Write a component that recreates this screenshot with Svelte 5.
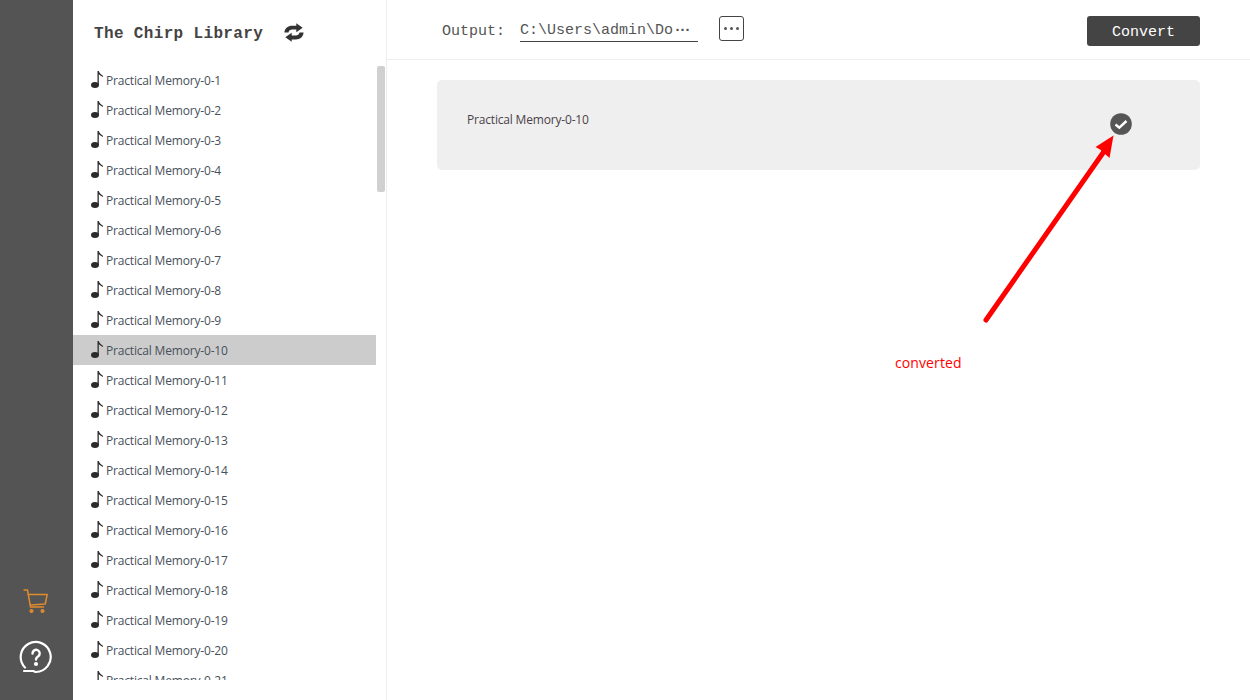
<script lang="ts">
	const tracks = Array.from({ length: 21 }, (_, i) => `Practical Memory-0-${i + 1}`);
	const selected = 'Practical Memory-0-10';
</script>

<div class="app">
	<nav class="rail">
		<svg class="cart" viewBox="0 0 26 26" fill="none" stroke="#e08a2e" stroke-width="1.5" stroke-linecap="round" stroke-linejoin="round">
			<path d="M1 2h3.500l3 17h13" />
			<path d="M5.200 6.500h19l-2 9.500-14.500 1" />
			<circle cx="8.500" cy="23" r="1.300" fill="#e08a2e" />
			<circle cx="19.500" cy="23" r="1.300" fill="#e08a2e" />
		</svg>
		<svg class="help" viewBox="0 0 34 34" fill="none" stroke="#fff" stroke-width="2.200" stroke-linecap="round">
			<path d="M5 31h9.500c1 1 2 1 2.500 1a15 15 0 1 0-11-4.500" />
			<path d="M13.500 13.500a3.600 3.600 0 1 1 5.500 3c-1.300.8-2 1.500-2 3" stroke-width="2.400" />
			<circle cx="17" cy="24" r="1" fill="#fff" />
		</svg>
	</nav>

	<aside class="library">
		<header class="library-head">
			<h1>The Chirp Library</h1>
			<svg class="refresh" viewBox="0 0 24 20" fill="#333">
				<path d="M1.500 10C2 5 5.500 2.500 10 2.500h4.500V0l7 4.800-7 4.800V6.800H10c-2 0-3.500 1-4 3.200z" />
				<path d="M22.500 10c-.5 5-4 7.500-8.500 7.500H9.500V20l-7-4.800 7-4.800v2.800H14c2 0 3.500-1 4-3.200z" />
			</svg>
		</header>
		<div class="list-wrap">
			<ul class="list">
				{#each tracks as track}
					<li class:selected={track === selected}>
						<svg class="note" viewBox="0 0 13 17" fill="#2b2b2b">
							<ellipse cx="4" cy="14" rx="4" ry="3" />
							<path d="M6.500 0h1.300c.3 2 2 3 4.400 5l-.7.900c-1.500-1-2.900-2-3.700-2.600V14H6.500z" />
						</svg>
						<span>{track}</span>
					</li>
				{/each}
			</ul>
			<div class="scroll-track"><div class="scroll-thumb"></div></div>
		</div>
	</aside>

	<main class="content">
		<header class="toolbar">
			<div class="output">
				<span class="output-label">Output:</span>
				<span class="output-path">C:\Users\admin\Do<span class="ellipsis">···</span></span>
				<button class="browse" aria-label="Browse"><i></i><i></i><i></i></button>
			</div>
			<button class="convert">Convert</button>
		</header>
		<section class="queue">
			<div class="job">
				<span class="job-name">{selected}</span>
				<svg class="done" viewBox="0 0 22 22">
					<circle cx="11" cy="11" r="10.800" fill="#555" />
					<path d="M5.500 11.500l3.800 3.200L16.500 8" fill="none" stroke="#fff" stroke-width="2.400" />
				</svg>
			</div>
		</section>
		<svg class="arrow" viewBox="0 0 160 220" fill="red">
			<path d="M3 204L122 34" stroke="red" stroke-width="5" stroke-linecap="round" />
			<path d="M130.500 19.500l-18 11.500 4.500 2.500 9.500 8.500z" />
		</svg>
		<span class="note-text">converted</span>
	</main>
</div>

<style>
	:global(body) {
		margin: 0;
		background: #fff;
	}

	.app {
		display: flex;
		height: 700px;
		width: 1250px;
		overflow: hidden;
		font-family: "Open Sans", "Noto Sans", sans-serif;
	}

	.rail {
		width: 73px;
		flex-shrink: 0;
		background: #545454;
		display: flex;
		flex-direction: column;
		align-items: center;
		justify-content: flex-end;
		padding-bottom: 26px;
		box-sizing: border-box;
	}

	.cart {
		width: 26px;
		height: 26px;
		margin: 0 2px 26px 0;
	}

	.help {
		width: 34px;
		height: 34px;
		margin-right: 1px;
	}

	.library {
		width: 314px;
		flex-shrink: 0;
		border-right: 1px solid #eee;
		box-sizing: border-box;
		display: flex;
		flex-direction: column;
	}

	.library-head {
		height: 65px;
		flex-shrink: 0;
		display: flex;
		align-items: center;
		padding: 0 0 0 21px;
		gap: 21px;
	}

	h1 {
		margin: 2px 0 0;
		font: bold 16px "Liberation Mono", monospace;
		letter-spacing: 0.35px;
		color: #444;
	}

	.refresh {
		width: 22px;
		height: 19px;
		margin-left: -1px;
	}

	.list-wrap {
		position: relative;
		height: 615px;
		overflow: hidden;
	}

	.list {
		list-style: none;
		margin: 0;
		padding: 0;
		width: 303px;
	}

	.list li {
		height: 30px;
		display: flex;
		align-items: center;
		padding-left: 18px;
		gap: 2px;
		font-size: 12px;
		letter-spacing: -0.18px;
		color: #48505a;
	}

	.list li.selected {
		background: #ccc;
	}

	.note {
		width: 13px;
		height: 17px;
		margin-top: -1px;
	}

	.scroll-track {
		position: absolute;
		top: 0;
		right: 1px;
		width: 8px;
		height: 100%;
	}

	.scroll-thumb {
		height: 126px;
		margin-top: 1px;
		background: #d0d0d0;
		border-radius: 2px;
	}

	.content {
		flex: 1;
		position: relative;
		display: flex;
		flex-direction: column;
	}

	.toolbar {
		height: 60px;
		box-sizing: border-box;
		border-bottom: 1px solid #eee;
		display: flex;
		align-items: center;
		justify-content: space-between;
		padding: 0 50px 0 55px;
		font-family: "Liberation Mono", monospace;
		font-size: 15px;
		color: #555;
	}

	.output {
		display: flex;
		align-items: center;
		margin-top: 1px;
	}

	.output-label {
		width: 78px;
		padding-top: 3px;
	}

	.output-path {
		width: 178px;
		height: 23px;
		line-height: 24px;
		box-sizing: border-box;
		border-bottom: 1px solid #444;
		white-space: nowrap;
		overflow: hidden;
	}

	.ellipsis {
		letter-spacing: -4px;
		font-weight: bold;
	}

	.browse {
		margin: 0 0 3px 21px;
		width: 25px;
		height: 25px;
		box-sizing: border-box;
		padding: 0;
		background: #fff;
		border: 1px solid #444;
		border-radius: 3px;
		display: flex;
		align-items: center;
		justify-content: center;
		gap: 3px;
	}

	.browse i {
		width: 3px;
		height: 3px;
		border-radius: 50%;
		background: #555;
	}

	.convert {
		width: 113px;
		height: 30px;
		margin-top: 2px;
		padding: 3px 0 0;
		border: none;
		border-radius: 3px;
		background: #444;
		color: #fff;
		font: 15px "Liberation Mono", monospace;
	}

	.queue {
		padding: 20px 50px 0;
	}

	.job {
		height: 90px;
		background: #efefef;
		border-radius: 5px;
		position: relative;
		padding: 30px;
		box-sizing: border-box;
		font-size: 12px;
		letter-spacing: -0.18px;
		line-height: 20px;
		color: #4a4248;
	}

	.done {
		position: absolute;
		left: 673px;
		top: 33px;
		width: 22px;
		height: 22px;
	}

	.arrow {
		position: absolute;
		left: 596px;
		top: 116px;
		width: 160px;
		height: 220px;
	}

	.note-text {
		position: absolute;
		left: 508px;
		top: 353px;
		font-size: 14px;
		letter-spacing: 0.1px;
		color: red;
	}
</style>
